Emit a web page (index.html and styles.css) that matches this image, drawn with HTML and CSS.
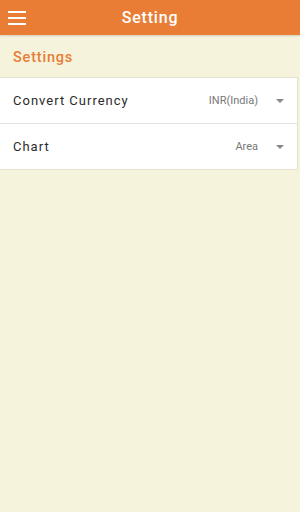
FILE: index.html
```html
<!DOCTYPE html>
<html lang="en">
<head>
    <meta charset="UTF-8">
    <meta name="viewport" content="width=device-width, initial-scale=1.0">
    <title>Setting</title>
    <link rel="stylesheet" href="styles.css">
</head>
<body>
    <header class="toolbar">
        <button class="menu-btn" aria-label="menu">
            <svg width="18" height="14" viewBox="0 0 18 14">
                <rect x="0" y="0" width="18" height="2" fill="#fff"/>
                <rect x="0" y="6" width="18" height="2" fill="#fff"/>
                <rect x="0" y="12" width="18" height="2" fill="#fff"/>
            </svg>
        </button>
        <h1 class="title">Setting</h1>
    </header>

    <div class="section-title">Settings</div>

    <div class="card">
        <div class="row">
            <span class="label">Convert Currency</span>
            <span class="value">INR(India)</span>
            <span class="caret"></span>
        </div>
        <div class="row">
            <span class="label">Chart</span>
            <span class="value">Area</span>
            <span class="caret"></span>
        </div>
    </div>
</body>
</html>
```

FILE: styles.css
```css
/* page */
body {
    margin: 0;
    padding: 0;
    width: 300px;
    height: 512px;
    background-color: #f5f3dc;
    font-family: 'Roboto', 'Noto Sans', sans-serif;
    overflow: hidden;
}

/* top bar */
.toolbar {
    height: 35px;
    background-color: #e97d36;
    display: flex;
    align-items: center;
    position: relative;
    box-shadow: 0 1px 2px rgba(0, 0, 0, 0.15);
}

.menu-btn {
    background: none;
    border: none;
    padding: 0 0 0 8px;
    height: 35px;
    display: flex;
    align-items: center;
}

.title {
    position: absolute;
    left: 0;
    right: 0;
    margin: 0;
    text-align: center;
    color: #fff;
    font-size: 16px;
    font-weight: 500;
    letter-spacing: 0.8px;
    pointer-events: none;
}

/* section heading */
.section-title {
    height: 38px;
    line-height: 38px;
    padding-top: 4px;
    padding-left: 13px;
    color: #e97d36;
    font-size: 14.5px;
    font-weight: 500;
    letter-spacing: 0.8px;
}

/* list card */
.card {
    width: 297px;
    background-color: #fff;
    border: 1px solid #e4e2cf;
    border-left: none;
}

.row {
    height: 45px;
    display: flex;
    align-items: center;
    padding: 0 13px 0 13px;
}

.row + .row {
    border-top: 1px solid #e2e2e2;
}

.label {
    flex: 1;
    color: #2b2b2b;
    font-size: 13px;
    letter-spacing: 1px;
}

.value {
    color: #777;
    font-size: 11px;
    margin-right: 18px;
}

.caret {
    width: 0;
    height: 0;
    border-left: 4px solid transparent;
    border-right: 4px solid transparent;
    border-top: 4px solid #888;
}
```
